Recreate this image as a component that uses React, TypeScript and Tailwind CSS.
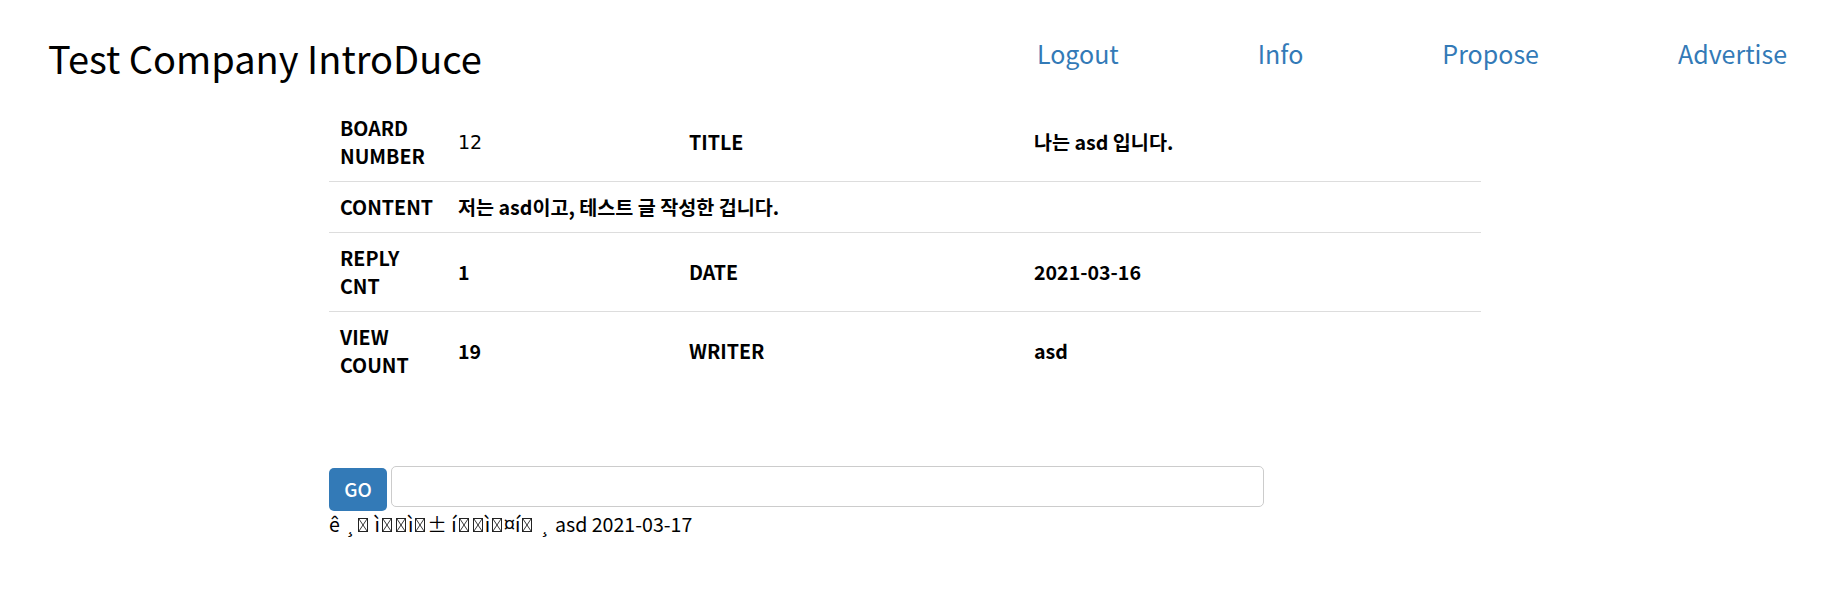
import React from "react";

const navLinks = ["Logout", "Info", "Propose", "Advertise"];

// missing-glyph box, as the browser shows for the broken bytes
function Tofu() {
  return (
    <span className="mx-[2px] inline-block h-[14px] w-[10px] border border-[#222]">
      <svg viewBox="0 0 8 12" width="8" height="12" className="block" preserveAspectRatio="none">
        <path d="M0 0 L8 12 M8 0 L0 12" stroke="#222" strokeWidth="0.9" fill="none" />
      </svg>
    </span>
  );
}

const cell = "px-[11px] py-[11px] align-middle";
const line = "border-t border-[#ddd]";

export default function App() {
  return (
    <div className="min-h-[605px] w-full bg-white text-black font-['Noto_Sans_CJK_KR','Noto_Sans',sans-serif]">
      {/* header */}
      <header className="flex h-[103px] items-start justify-between">
        <h3 className="pl-[48px] pt-[38px] text-[38px] leading-[40px] font-normal text-black">
          Test Company IntroDuce
        </h3>
        <nav className="flex gap-[139px] pr-[46px] pt-[35px]">
          {navLinks.map((l) => (
            <a key={l} href="#" className="text-[25px] leading-[36px] text-[#337ab7]">
              {l}
            </a>
          ))}
        </nav>
      </header>

      {/* board detail */}
      <div className="ml-[329px] w-[1152px]">
        <table className="w-[1152px] table-fixed border-collapse text-[19.6px] leading-[28px]">
          <colgroup>
            <col className="w-[118px]" />
            <col className="w-[231px]" />
            <col className="w-[345px]" />
            <col />
          </colgroup>
          <tbody>
            <tr>
              <td className={`${cell} font-bold`}>BOARD<br />NUMBER</td>
              <td className={`${cell} font-['DejaVu_Sans',sans-serif] text-[19px]`}>12</td>
              <td className={`${cell} font-bold`}>TITLE</td>
              <td className={`${cell} font-bold`}>나는 asd 입니다.</td>
            </tr>
            <tr>
              <td className={`${cell} ${line} font-bold`}>CONTENT</td>
              <td colSpan={3} className={`${cell} ${line} font-bold`}>
                저는 asd이고, 테스트 글 작성한 겁니다.
              </td>
            </tr>
            <tr>
              <td className={`${cell} ${line} font-bold`}>REPLY<br />CNT</td>
              <td className={`${cell} ${line} font-bold`}>1</td>
              <td className={`${cell} ${line} font-bold`}>DATE</td>
              <td className={`${cell} ${line} font-bold`}>2021-03-16</td>
            </tr>
            <tr>
              <td className={`${cell} ${line} font-bold`}>VIEW<br />COUNT</td>
              <td className={`${cell} ${line} font-bold`}>19</td>
              <td className={`${cell} ${line} font-bold`}>WRITER</td>
              <td className={`${cell} ${line} font-bold`}>asd</td>
            </tr>
          </tbody>
        </table>

        {/* reply form */}
        <div className="mt-[76px] flex items-start gap-[4px]">
          <button className="mt-[2px] h-[43px] w-[58px] rounded-[5px] bg-[#337ab7] text-[19px] font-medium text-white">
            GO
          </button>
          <input
            type="text"
            className="h-[41px] w-[873px] rounded-[5px] border border-[#ccc] bg-white px-[12px] outline-none"
          />
        </div>
        <p className="mt-[-1px] text-[19.6px] leading-[28px]">
          ê ¸<Tofu /> ì<Tofu /><Tofu />ì<Tofu />± í<Tofu /><Tofu />ì<Tofu />¤í<Tofu /> ¸ asd 2021-03-17
        </p>
      </div>
    </div>
  );
}
